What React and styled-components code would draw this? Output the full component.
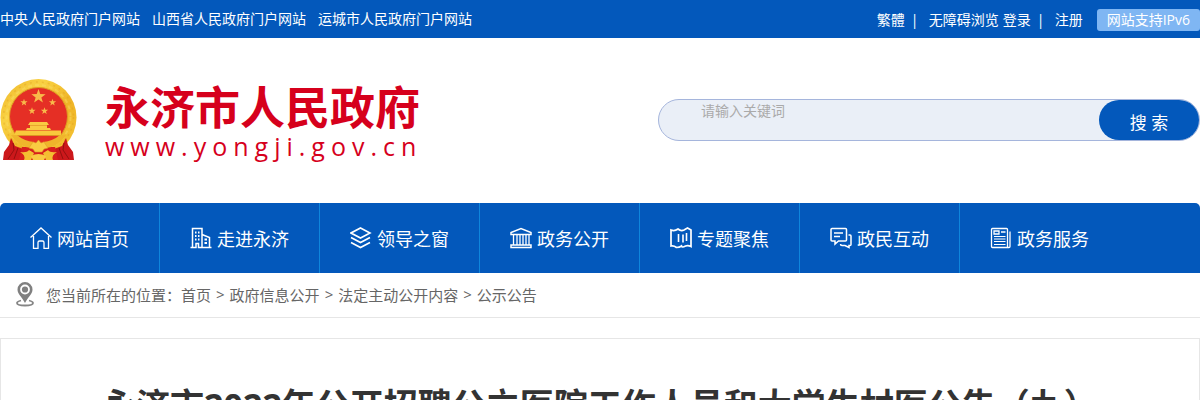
import React, { useState } from 'react';
import styled, { createGlobalStyle } from 'styled-components';

const portalLinks = ['中央人民政府门户网站', '山西省人民政府门户网站', '运城市人民政府门户网站'];
const crumbs = ['首页', '政府信息公开', '法定主动公开内容', '公示公告'];

const navItems = [
  { label: '网站首页', Icon: HomeIcon },
  { label: '走进永济', Icon: CityIcon },
  { label: '领导之窗', Icon: LayersIcon },
  { label: '政务公开', Icon: HallIcon },
  { label: '专题聚焦', Icon: MapIcon },
  { label: '政民互动', Icon: ChatIcon },
  { label: '政务服务', Icon: PaperIcon },
];

export default function App() {
  const [keyword, setKeyword] = useState('');

  return (
    <>
      <GlobalStyle />
      <TopBar>
        <TopLinks>
          {portalLinks.map((name) => (
            <a href="#" key={name}>{name}</a>
          ))}
        </TopLinks>
        <TopTools>
          <a href="#">繁體</a>
          <Divider>|</Divider>
          <a href="#">无障碍浏览</a>
          <LoginLink href="#">登录</LoginLink>
          <Divider>|</Divider>
          <a href="#">注册</a>
          <Ipv6Badge>网站支持IPv6</Ipv6Badge>
        </TopTools>
      </TopBar>

      <Header>
        <Brand href="#">
          <Emblem />
          <BrandText>
            <BrandName>永济市人民政府</BrandName>
            <BrandUrl>www.yongji.gov.cn</BrandUrl>
          </BrandText>
        </Brand>
        <SearchForm onSubmit={(e) => e.preventDefault()}>
          <SearchInput
            type="text"
            aria-label="请输入关键词"
            placeholder="请输入关键词"
            value={keyword}
            onChange={(e) => setKeyword(e.target.value)}
          />
          <SearchButton type="submit">搜 索</SearchButton>
        </SearchForm>
      </Header>

      <Nav>
        {navItems.map(({ label, Icon }) => (
          <NavLink href="#" key={label}>
            <Icon />
            {label}
          </NavLink>
        ))}
      </Nav>

      <Breadcrumb>
        <PinIcon />
        <span>您当前所在的位置：</span>
        {crumbs.map((name, i) => (
          <React.Fragment key={name}>
            {i > 0 && <Arrow>&gt;</Arrow>}
            <a href="#">{name}</a>
          </React.Fragment>
        ))}
      </Breadcrumb>

      <Article>
        <ArticleTitle>永济市2022年公开招聘公立医院工作人员和大学生村医公告（九）</ArticleTitle>
      </Article>
    </>
  );
}

// icons:

function Star({ x, y, r }) {
  const points = [];
  for (let i = 0; i < 10; i++) {
    const radius = i % 2 ? r * 0.4 : r;
    const angle = (Math.PI / 5) * i - Math.PI / 2;
    points.push(`${x + radius * Math.cos(angle)},${y + radius * Math.sin(angle)}`);
  }
  return <polygon points={points.join(' ')} fill="#f8b94a" />;
}

function Emblem() {
  return (
    <svg width="77" height="82" viewBox="0 0 77 82" aria-hidden="true">
      <defs>
        <linearGradient id="gold" x1="0" y1="0" x2="1" y2="1">
          <stop offset="0" stopColor="#eeb52c" />
          <stop offset="0.3" stopColor="#f9d243" />
          <stop offset="0.6" stopColor="#efb426" />
          <stop offset="1" stopColor="#f6c838" />
        </linearGradient>
      </defs>
      <ellipse cx="38.5" cy="38.5" rx="38" ry="38.500" fill="url(#gold)" />
      <circle cx="38.5" cy="38" r="35" fill="none" stroke="#d9981f" strokeWidth="1.500" strokeDasharray="2 4" opacity="0.35" />
      <circle cx="38.5" cy="38" r="32" fill="none" stroke="#fbe070" strokeWidth="2" strokeDasharray="4 3" opacity="0.4" />
      <circle cx="38.5" cy="37.500" r="29" fill="#e52f25" stroke="#dc9c22" strokeWidth="1" />
      <Star x={38.5} y={17.5} r={7.5} />
      <Star x={24} y={23.500} r={3.8} />
      <Star x={52.5} y={23.5} r={3.8} />
      <Star x={32} y={32} r={3.8} />
      <Star x={44.5} y={32} r={3.8} />
      <path d="M30 43h17l2 3h-2v3h3l1 2H26l1-2h3v-3h-2z" fill="#f9cb42" />
      <path d="M30 46.500h17" stroke="#e39825" strokeWidth="0.7" />
      <path d="M16 51.500h45v5H14z" fill="#f9c93c" />
      <path d="M15 56.500h47" stroke="#dc9422" strokeWidth="1" />
      <path d="M11 59l4 8 11 4-6 10H3l1-8 5-7zM66 59l-4 8-11 4 6 10h17l-1-8-5-7z" fill="#cc181b" />
      <path d="M13 64l1 7-6 9M64 64l-1 7 6 9M18 69l-4 11M59 69l4 11" fill="none" stroke="#95100f" strokeWidth="1" />
      <path d="M22 68h33l3 13H19z" fill="#d81f1c" />
      <path d="M11 56q8 12 20 13l3-6q-10-1-17-7zM66 56q-8 12-20 13l-3-6q10-1 17-7z" fill="#efb52b" />
      <path d="M20 73q7 1 9-2l5 3-3 7H24q2-5-4-8zM57 73q-7 1-9-2l-5 3 3 7h7q-2-5 4-8z" fill="#f4be31" />
      <path d="M31 66l2-3 3 1 2.500-3 2.500 3 3-1 2 3 2 3-4 1-2 3h-7l-2-3-4-1z" fill="#f9cb42" stroke="#e09a26" strokeWidth="0.6" />
      <path d="M31 77q7.500-4 15 0l-2 4H33z" fill="#f9cb42" />
    </svg>
  );
}

function HomeIcon() {
  return (
    <NavSvg>
      <path d="M0.500 10.500L11 1l10.500 9.500M3.500 9v12.500h4.500v-6q0-1.500 1.500-1.500h3q1.500 0 1.500 1.500v6h4.500V9" />
    </NavSvg>
  );
}

function CityIcon() {
  return (
    <NavSvg>
      <path d="M2.500 20.500v-19h9.500v19M12 7.500l7.500 3v10M0.500 20.500H6v-4h2.500v4h13" strokeWidth="1.500" />
      <path d="M5 5.500h1.500M8 5.500h1.500M5 9h1.500M8 9h1.500M5 12.500h1.500M8 12.500h1.500M14.500 12.500H17M14.500 16H17" strokeWidth="1.800" />
    </NavSvg>
  );
}

function LayersIcon() {
  return (
    <NavSvg>
      <path d="M10.500 1l9.500 5-9.500 5L1 6zM1 10.500l9.500 5 9.500-5M1 15.500l9.500 5 9.500-5" strokeWidth="1.600" />
    </NavSvg>
  );
}

function HallIcon() {
  return (
    <NavSvg>
      <path d="M1 7.500v-2L11 1.500l10 4v2zM1 20.500v-2.500h20v2.500z" strokeWidth="1.500" />
      <path d="M3.500 8v10M7 8v10M10 8v10M13 8v10M16 8v10M19 8v10" />
    </NavSvg>
  );
}

function MapIcon() {
  return (
    <NavSvg>
      <path d="M1 3q3.500 1.500 7-1 3 2.500 6 1l3.500-2 3.500 2v16.500q-3-1.500-5.500-.500-3.500 2-4 0-2 1.500-5 1.500-2.500-2-5.500-1.500z" strokeWidth="1.700" />
      <path d="M8.500 7v8M13 7.500v8M16.500 6v8" strokeWidth="1.600" />
    </NavSvg>
  );
}

function ChatIcon() {
  return (
    <NavSvg>
      <path d="M2 1.500h13.500q1 0 1 1V13q0 1-1 1H8.500L5 17v-3H2q-1 0-1-1V2.500q0-1 1-1zM4 6h9M4 9.500h6" strokeWidth="1.500" />
      <path d="M18.500 8H20q1 0 1 1v8.500q0 1-1 1h-1v2l-4-2H12q-1.500 0-1.500-1.500" strokeWidth="1.500" />
    </NavSvg>
  );
}

function PaperIcon() {
  return (
    <NavSvg>
      <path d="M2.500 1.500h14q1 0 1 1v18h-15q-1 0-1-1v-17q0-1 1-1zM20 4.500v15q0 1-1 1h-2M4 4h5v3H4zM11 5h4.500" />
      <path d="M4 9.500h11.500M4 12h11.500M4 14.500h11.500M4 17.500h11.500" strokeWidth="1" />
    </NavSvg>
  );
}

function PinIcon() {
  return (
    <svg width="18" height="25" viewBox="0 0 18 25" aria-hidden="true">
      <path d="M5 18.500q-4 1-4 2.500 0 2.500 8 2.500t8-2.500q0-1.500-4-2.500" fill="none" stroke="#858585" strokeWidth="1.800" />
      <path d="M9 0a7.500 7.500 0 0 1 7.500 7.500C16.500 12 12 15 9 21 6 15 1.500 12 1.500 7.500A7.500 7.500 0 0 1 9 0z" fill="#808080" />
      <circle cx="9" cy="7.500" r="4" fill="#808080" stroke="#fff" strokeWidth="1.800" />
    </svg>
  );
}

// styles:

const blue = '#0358bb';

const GlobalStyle = createGlobalStyle`
  * {
    box-sizing: border-box;
  }
  body {
    margin: 0;
    background: #fff;
    color: #333;
    font-family: "Open Sans", "Noto Sans CJK SC", sans-serif;
    font-size: 14px;
    overflow: hidden;
  }
  a {
    color: inherit;
    text-decoration: none;
  }
`;

const TopBar = styled.div`
  display: flex;
  justify-content: space-between;
  align-items: center;
  height: 38px;
  background: ${blue};
  color: #fff;
  line-height: 22px;
  white-space: nowrap;
`;

const TopLinks = styled.div`
  display: flex;
  gap: 12px;
`;

const TopTools = styled.div`
  display: flex;
  align-items: center;
  padding-top: 2px;
`;

const Divider = styled.span`
  width: 24px;
  padding-right: 4px;
  text-align: center;
`;

const LoginLink = styled.a`
  margin-left: 4px;
`;

const Ipv6Badge = styled.span`
  margin-left: 14px;
  padding: 0 10px;
  border-radius: 3px;
  background: #7fb6f3;
`;

const Header = styled.header`
  display: flex;
  justify-content: space-between;
  align-items: center;
  height: 165px;
  padding-bottom: 2px;
`;

const Brand = styled.a`
  display: flex;
  align-items: center;
  gap: 28px;
  color: #d6001c;
`;

const BrandText = styled.div`
  white-space: nowrap;
`;

const BrandName = styled.div`
  font-size: 45px;
  font-weight: 700;
  line-height: 52px;
`;

const BrandUrl = styled.div`
  font-size: 25px;
  line-height: 24px;
  letter-spacing: 6px;
`;

const SearchForm = styled.form`
  display: flex;
  width: 542px;
  height: 42px;
  border: 1px solid #a5b5dc;
  border-radius: 21px;
  background: #eaeff7;
`;

const SearchInput = styled.input`
  flex: 1;
  min-width: 0;
  height: 22px;
  padding: 0 0 0 42px;
  border: 0;
  outline: 0;
  background: transparent;
  font-family: inherit;
  font-size: 14px;

  &::placeholder {
    color: #aaa;
  }
`;

const SearchButton = styled.button`
  width: 100px;
  padding: 4px 0 0;
  border: 0;
  border-radius: 20px;
  background: ${blue};
  color: #fff;
  font-family: inherit;
  font-size: 17px;
  cursor: pointer;
`;

const Nav = styled.nav`
  display: flex;
  height: 70px;
  border-radius: 5px 5px 0 0;
  background: ${blue};
`;

const NavLink = styled.a`
  display: flex;
  align-items: center;
  gap: 5px;
  width: 160px;
  padding-left: 30px;
  border-right: 1px solid #0f86dc;
  color: #fff;
  font-size: 18px;
  white-space: nowrap;

  &:last-child {
    border-right: 0;
  }
`;

const NavSvg = styled.svg.attrs({ viewBox: '0 0 22 22', 'aria-hidden': true })`
  width: 22px;
  height: 22px;
  fill: none;
  stroke: #fff;
  stroke-width: 1.3;
`;

const Breadcrumb = styled.div`
  display: flex;
  align-items: center;
  height: 45px;
  padding: 0 0 2px 16px;
  border-bottom: 1px solid #e6e6e6;
  color: #666;
  font-size: 15px;
  white-space: nowrap;

  svg {
    margin-right: 12px;
  }
`;

const Arrow = styled.span`
  padding: 0 5px;
`;

const Article = styled.main`
  margin-top: 20px;
  padding: 36px 20px;
  border: 1px solid #e6e6e6;
`;

const ArticleTitle = styled.h1`
  margin: 0;
  font-size: 34px;
  line-height: 60px;
  text-align: center;
`;
